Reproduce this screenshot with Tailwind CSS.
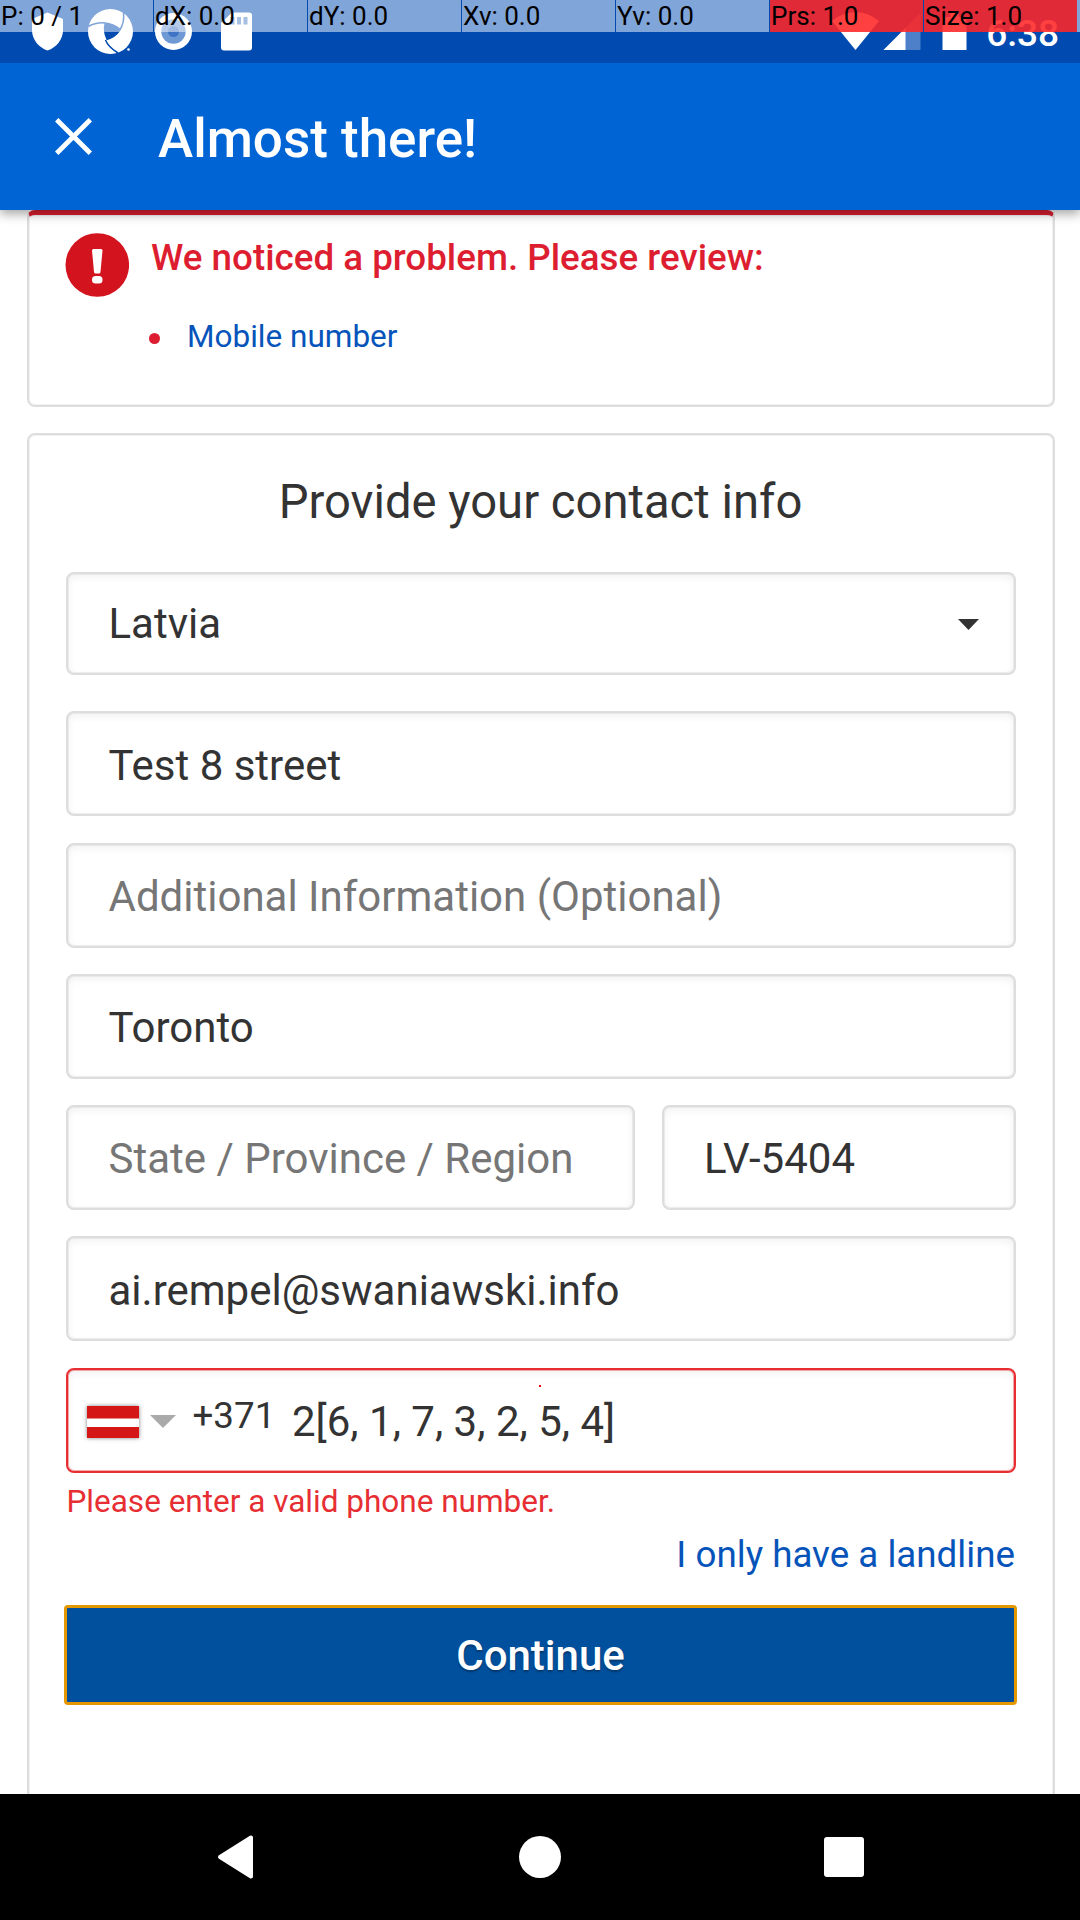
<!DOCTYPE html>
<html lang="en">
<head>
<meta charset="utf-8">
<title>Almost there!</title>
<script src="https://cdn.jsdelivr.net/npm/@tailwindcss/browser@4"></script>
</head>
<body class="bg-white">
<div class="relative flex h-[1920px] w-[1080px] flex-col overflow-hidden bg-white font-['Roboto',sans-serif] text-[#333]">

  <!-- Status bar -->
  <header class="relative z-20 flex h-[63px] shrink-0 items-start justify-between bg-[#004ab0] text-white">
    <svg class="h-[63px] w-[270px]" viewBox="0 0 270 63" fill="#fff">
      <path d="M47.500 12.500 63 19v11c0 9.500-6.500 17.500-15.500 20.500C38.500 47.500 32 39.500 32 30V19z"/>
      <circle cx="110.500" cy="31.500" r="22.500"/>
      <g fill="none" stroke="#004ab0" stroke-width="1.500">
        <path d="M88.500 26.500c6-3.500 11-4 16.500-3.500 6 .5 11 3 15.500 6.500"/>
        <path d="M123.500 12.500c1 8-1 13.500-4 18-3 4.500-8 7.500-13 9"/>
        <path d="M105.500 40c1.500 4 6 9 12.500 13"/>
      </g>
      <path d="M104.500 23c6 .5 11 3 15.500 6.500-3 4.500-7.500 8-13.500 10-2.500-5-3.500-10.500-2-16.500z" fill="#004ab0"/>
      <circle cx="128.500" cy="49.500" r="1.300"/>
      <circle cx="173.500" cy="31.500" r="18.500"/>
      <circle cx="173.500" cy="31.500" r="12.200" fill="#6f99d4"/>
      <circle cx="173.500" cy="31.500" r="5.500" fill="#3f73c5"/>
      <path d="M232 12.500h17a3 3 0 0 1 3 3v32a3 3 0 0 1-3 3h-25a3 3 0 0 1-3-3V23z"/>
      <path d="M230.500 17h4v7.500h-4zM237 17h4v7.500h-4zM243.500 17h4v7.500h-4z" fill="#4d80c8"/>
    </svg>
    <div class="flex items-start pr-[21px]">
      <svg class="h-[63px] w-[159px]" viewBox="827.500 0 159 63" fill="#fff">
        <path d="M832.500 21a36 36 0 0 1 47 0L856 50z"/>
        <path d="M921 13v37h-37z" fill-opacity=".3"/>
        <path d="M906 28v22h-22z"/>
        <path d="M943 17h8v-4h8v4h8v33h-24z"/>
      </svg>
      <span class="pt-[12px] text-[37px] leading-[43px] font-medium">6:38</span>
    </div>
    <!-- Pointer location readout -->
    <div class="absolute inset-x-0 top-0 grid h-[32px] grid-cols-[repeat(7,153px)_3px] gap-x-px text-[26px] leading-[32px] whitespace-nowrap text-black *:pl-px">
      <div class="bg-white/50">P: 0 / 1</div>
      <div class="bg-white/50">dX: 0.0</div>
      <div class="bg-white/50">dY: 0.0</div>
      <div class="bg-white/50">Xv: 0.0</div>
      <div class="bg-white/50">Yv: 0.0</div>
      <div class="bg-[#ff2626]/88">Prs: 1.0</div>
      <div class="bg-[#ff2626]/88">Size: 1.0</div>
      <div class="-ml-px bg-white/50"></div>
    </div>
  </header>

  <!-- Toolbar -->
  <div class="relative z-10 flex h-[147px] shrink-0 items-center bg-[#0064d5] pl-[55px] text-white shadow-[0_4px_10px_rgba(0,0,0,0.35)]">
    <svg class="h-[37px] w-[37px]" viewBox="0 0 37 37" stroke="#fff" stroke-width="4.800"><path d="M1.700 1.700l33.600 33.600M35.300 1.700L1.700 35.300"/></svg>
    <h1 class="pt-[4px] pl-[66px] text-[53px] leading-[62px] font-medium">Almost there!</h1>
  </div>

  <main class="flex h-[1584px] shrink-0 flex-col overflow-hidden px-[27px] pr-[25px]">
    <!-- Error summary -->
    <section class="flex h-[197px] shrink-0 rounded-[8px] border-2 border-t-[5px] border-[#ddd] border-t-[#dd1e31] pt-[18px] pl-[36px] shadow-[inset_0_0_0_1px_rgba(221,221,221,0.4)]">
      <svg class="h-[64px] w-[64px]" viewBox="0 0 64 64">
        <circle cx="32.300" cy="32" r="31.800" fill="#d3141f"/>
        <path d="M27 17.500q0-1.500 1.500-1.500h7.500q1.500 0 1.500 1.500L35.500 39q-.2 1.500-1.500 1.500h-3.500q-1.300 0-1.500-1.500z" fill="#fff"/>
        <rect x="27" y="43" width="10.500" height="7.500" rx="3.500" fill="#fff"/>
      </svg>
      <div class="pl-[22px]">
        <h2 class="text-[36.750px] leading-[50px] font-medium text-[#dd1e31]">We noticed a problem. Please review:</h2>
        <ul class="flex items-center gap-[27px] pt-[30px]">
          <li class="mt-[2px] -ml-[2px] h-[11px] w-[11px] list-none rounded-full bg-[#dd1e31]"></li>
          <li class="list-none text-[31.500px] leading-[48px] text-[#0654ba]">Mobile number</li>
        </ul>
      </div>
    </section>

    <!-- Contact form -->
    <section class="mt-[26px] flex h-[1500px] shrink-0 flex-col rounded-[8px] border-2 border-[#ddd] px-[37px] shadow-[inset_0_0_0_1px_rgba(221,221,221,0.4)]">
      <h2 class="pt-[36px] pr-px text-center text-[47.200px] leading-[62px]">Provide your contact info</h2>
      <div class="mt-[39px] flex h-[103px] items-center justify-between rounded-[8px] border-2 border-[#ddd] pt-px pr-[35px] pl-[40.500px] text-[42px] leading-[50px] shadow-[inset_0_0_0_1px_rgba(221,221,221,0.5),inset_0_3px_8px_rgba(0,0,0,0.06)]">
        <span>Latvia</span>
        <svg class="mt-px h-[11px] w-[21px]" viewBox="0 0 21 11" fill="#333"><path d="M0 0h21L10.500 11z"/></svg>
      </div>
      <div class="mt-[36.250px] flex flex-col gap-[26.300px] text-[42px] leading-[50px] *:h-[105px]">
        <div class="flex items-center rounded-[8px] border-2 border-[#ddd] pt-[4px] pl-[40.500px] shadow-[inset_0_0_0_1px_rgba(221,221,221,0.5),inset_0_3px_8px_rgba(0,0,0,0.06)]">Test 8 street</div>
        <div class="flex items-center rounded-[8px] border-2 border-[#ddd] pt-[4px] pl-[40.500px] text-[#767676] shadow-[inset_0_0_0_1px_rgba(221,221,221,0.5),inset_0_3px_8px_rgba(0,0,0,0.06)]">Additional Information (Optional)</div>
        <div class="flex items-center rounded-[8px] border-2 border-[#ddd] pt-[4px] pl-[40.500px] shadow-[inset_0_0_0_1px_rgba(221,221,221,0.5),inset_0_3px_8px_rgba(0,0,0,0.06)]">Toronto</div>
        <div class="grid grid-cols-[569px_354px] gap-[27px]">
          <div class="flex items-center rounded-[8px] border-2 border-[#ddd] pt-[3px] pl-[40.500px] text-[#767676] shadow-[inset_0_0_0_1px_rgba(221,221,221,0.5),inset_0_3px_8px_rgba(0,0,0,0.06)]">State / Province / Region</div>
          <div class="flex items-center rounded-[8px] border-2 border-[#ddd] pt-[3px] pl-[40px] shadow-[inset_0_0_0_1px_rgba(221,221,221,0.5),inset_0_3px_8px_rgba(0,0,0,0.06)]">LV-5404</div>
        </div>
        <div class="flex items-center rounded-[8px] border-2 border-[#ddd] pt-[4px] pl-[40.500px] shadow-[inset_0_0_0_1px_rgba(221,221,221,0.5),inset_0_3px_8px_rgba(0,0,0,0.06)]">ai.rempel@swaniawski.info</div>
        <div class="relative flex items-center rounded-[8px] border-2 border-[#e62e33] pt-[3px] pl-[19px] shadow-[inset_0_0_0_1px_rgba(230,46,51,0.4),inset_0_3px_8px_rgba(0,0,0,0.06)]">
          <svg class="mt-px h-[32px] w-[52px] shadow-[0_0_4px_rgba(0,0,0,0.5)]" viewBox="0 0 52 32"><path fill="#fff" d="M0 0h52v32H0z"/><path fill="#d51617" d="M0 0h52v12.500H0zM0 21h52v11H0z"/></svg>
          <svg class="ml-[11px] h-[13px] w-[26px]" viewBox="0 0 26 13" fill="#aaa"><path d="M0 0h26L13 13z"/></svg>
          <span class="-mt-[11px] ml-[16.500px] w-[99.500px] text-[36.750px]">+371</span>
          <span>2[6, 1, 7, 3, 2, 5, 4]</span>
          <i class="absolute top-[15px] left-[471px] h-[2px] w-[2px] bg-red-600"></i>
        </div>
      </div>
      <p class="pt-[8.200px] pl-[0.500px] text-[31.500px] leading-[42px] text-[#e62e33]">Please enter a valid phone number.</p>
      <a class="pt-[7px] pr-px text-right text-[36.750px] leading-[50px] text-[#0654ba]">I only have a landline</a>
      <button class="-mr-px -ml-[2px] mt-[25px] h-[100px] shrink-0 rounded-[4px] border-3 border-[#e59700] bg-[#00509d] pt-px text-[42px] font-medium text-white [text-shadow:0_2px_2px_rgba(0,0,0,0.3)]">Continue</button>
    </section>
  </main>

  <!-- System navigation -->
  <nav class="relative z-10 h-[126px] shrink-0 bg-black">
    <svg class="h-[126px] w-[1080px]" viewBox="0 1794 1080 126" fill="#fff">
      <path d="M251 1837.500v39l-31-19.500z" stroke="#fff" stroke-width="4" stroke-linejoin="round"/>
      <circle cx="540" cy="1857" r="21"/>
      <rect x="824" y="1837" width="40" height="40" rx="3"/>
    </svg>
  </nav>
</div>
</body>
</html>
